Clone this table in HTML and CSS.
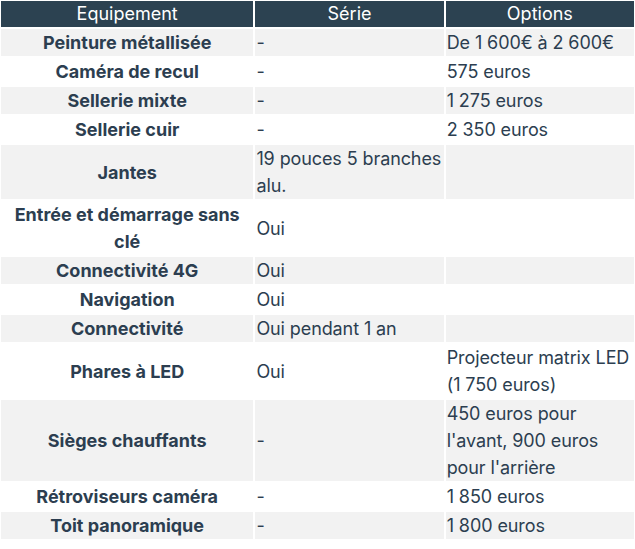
FILE: index.html
```html
<!DOCTYPE html>
<html lang="fr">
<head>
<meta charset="utf-8">
<title>Equipements</title>
<link rel="stylesheet" href="styles.css">
</head>
<body>
<table class="equip">
  <colgroup>
    <col class="c1"><col class="c2"><col class="c3">
  </colgroup>
  <thead>
    <tr><th>Equipement</th><th>Série</th><th>Options</th></tr>
  </thead>
  <tbody>
    <tr><td class="name">Peinture métallisée</td><td>-</td><td>De 1 600€ à 2 600€</td></tr>
    <tr><td class="name">Caméra de recul</td><td>-</td><td>575 euros</td></tr>
    <tr><td class="name">Sellerie mixte</td><td>-</td><td>1 275 euros</td></tr>
    <tr><td class="name">Sellerie cuir</td><td>-</td><td>2 350 euros</td></tr>
    <tr><td class="name">Jantes</td><td>19 pouces 5 branches alu.</td><td></td></tr>
    <tr><td class="name">Entrée et démarrage sans clé</td><td>Oui</td><td></td></tr>
    <tr><td class="name">Connectivité 4G</td><td>Oui</td><td></td></tr>
    <tr><td class="name">Navigation</td><td>Oui</td><td></td></tr>
    <tr><td class="name">Connectivité</td><td>Oui pendant 1 an</td><td></td></tr>
    <tr><td class="name">Phares à LED</td><td>Oui</td><td>Projecteur matrix LED (1&nbsp;750 euros)</td></tr>
    <tr><td class="name">Sièges chauffants</td><td>-</td><td>450 euros pour l'avant, 900 euros pour l'arrière</td></tr>
    <tr><td class="name">Rétroviseurs caméra</td><td>-</td><td>1 850 euros</td></tr>
    <tr><td class="name">Toit panoramique</td><td>-</td><td>1 800 euros</td></tr>
  </tbody>
</table>
</body>
</html>
```
FILE: styles.css
```css
html, body {
  margin: 0;
  padding: 0;
  background: #ffffff;
}
body {
  font-family: Inter, "Noto Sans", sans-serif;
  font-size: 18px;
  line-height: 27px;
  color: #2c3e50;
}
.equip {
  width: 637px;
  margin: -1px 0 0 -1px;
  border-collapse: separate;
  border-spacing: 2px;
  table-layout: fixed;
}
.c1 { width: 252px; }
.c2 { width: 188px; }
.c3 { width: 188px; }
.equip th {
  background: #2c4251;
  color: #ffffff;
  font-weight: 400;
  text-align: center;
  padding: 0 1px;
  height: 26px;
  line-height: 26px;
}
.equip td {
  padding: 0 0 0 1px;
  vertical-align: middle;
  text-align: left;
  letter-spacing: -0.1px;
}
.equip tbody tr:nth-child(odd) td {
  background: #f2f2f2;
}
.equip td.name {
  font-weight: 700;
  text-align: center;
  letter-spacing: 0;
  padding: 0 1px;
}
```
